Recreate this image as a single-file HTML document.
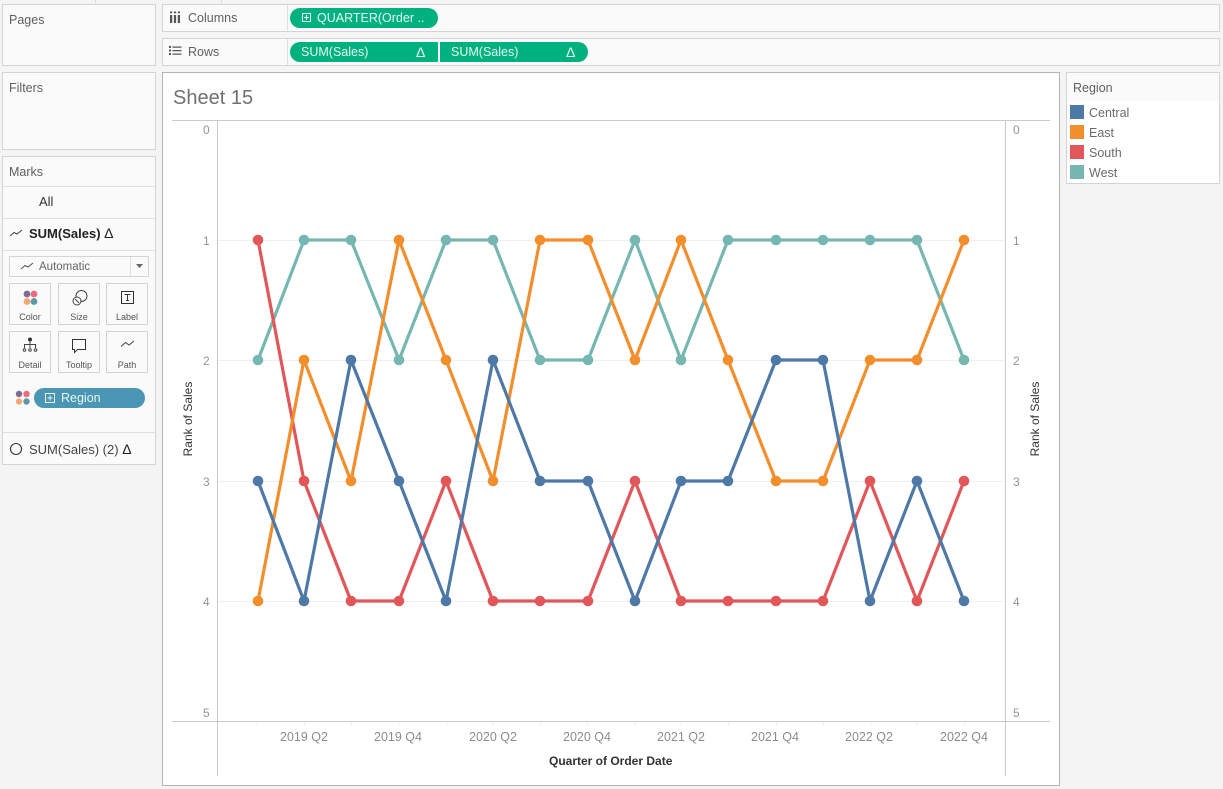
<!DOCTYPE html>
<html>
<head>
<meta charset="utf-8">
<style>
html,body{margin:0;padding:0;width:1223px;height:789px;overflow:hidden;background:#f4f4f4;font-family:"Liberation Sans",sans-serif;color:#5f5f5f;}
.a{position:absolute;box-sizing:border-box;}
.p{background:#fafafa;border:1px solid #d4d4d4;}
.t{position:absolute;white-space:nowrap;font-size:12.500px;line-height:14px;}
.pill{position:absolute;height:20px;background:#00b180;color:#e8f8f2;font-size:12.500px;line-height:20px;white-space:nowrap;}
.card{position:absolute;box-sizing:border-box;width:42px;height:42px;background:#fafafa;border:1px solid #d4d4d4;}
.card span{position:absolute;left:0;right:0;top:27px;text-align:center;font-size:9px;line-height:12px;color:#555;}
.card svg{position:absolute;left:0;top:0;}
.line{position:absolute;background:#e0e0e0;}
.n{position:absolute;font-size:12px;line-height:14px;color:#949494;}
.q{position:absolute;width:70px;text-align:center;font-size:12.500px;line-height:14px;color:#8c8c8c;top:730px;}
.chart g circle{r:5.300px;}
</style>
</head>
<body>
<div class="a" style="left:95px;top:0;width:1px;height:3px;background:#ddd"></div>
<div class="a" style="left:221px;top:0;width:1px;height:3px;background:#ddd"></div>

<!-- Pages -->
<div class="a p" style="left:2px;top:4px;width:154px;height:62px"></div>
<div class="t" style="left:9px;top:13px">Pages</div>
<!-- Filters -->
<div class="a p" style="left:2px;top:72px;width:154px;height:78px"></div>
<div class="t" style="left:9px;top:81px">Filters</div>
<!-- Marks -->
<div class="a p" style="left:2px;top:156px;width:154px;height:309px"></div>
<div class="t" style="left:9px;top:165px">Marks</div>
<div class="line" style="left:3px;top:186px;width:152px;height:1px"></div>
<div class="t" style="left:39px;top:195px;color:#333;font-size:13px">All</div>
<div class="line" style="left:3px;top:218px;width:152px;height:1px"></div>
<svg class="a" style="left:9px;top:227px" width="16" height="12"><path d="M1 9 L5 5.500 L8 7 L13 3" fill="none" stroke="#444" stroke-width="1"/></svg>
<div class="t" style="left:29px;top:226px;font-weight:bold;color:#222;font-size:13px">SUM(Sales) <span style="font-weight:normal;font-size:14px">Δ</span></div>
<div class="line" style="left:3px;top:250px;width:152px;height:1px"></div>

<div class="a" style="left:9px;top:256px;width:140px;height:21px;border:1px solid #d4d4d4;background:#fafafa"></div>
<div class="line" style="left:130px;top:257px;width:1px;height:19px"></div>
<svg class="a" style="left:20px;top:261px" width="16" height="10"><path d="M1 8 L5 4.500 L8 6 L13 2" fill="none" stroke="#555" stroke-width="1"/></svg>
<div class="t" style="left:39px;top:260px;font-size:11.500px;color:#666">Automatic</div>
<svg class="a" style="left:136px;top:264px" width="8" height="5"><path d="M0 0H7L3.500 4Z" fill="#666"/></svg>

<div class="card" style="left:9px;top:283px"><svg width="40" height="26"><circle cx="17" cy="10" r="3.400" fill="#7f6b97"/><circle cx="24" cy="10" r="3.400" fill="#ee6a7c"/><circle cx="17" cy="17.500" r="3.400" fill="#f2a873"/><circle cx="24" cy="17.500" r="3.400" fill="#5f96a6"/></svg><span>Color</span></div>
<div class="card" style="left:58px;top:283px"><svg width="40" height="26"><circle cx="22.500" cy="12" r="5.500" fill="none" stroke="#444"/><circle cx="18" cy="17" r="4" fill="#fafafa" stroke="#444"/><path d="M16 15L20 19" stroke="#444"/></svg><span>Size</span></div>
<div class="card" style="left:106px;top:283px"><svg width="40" height="26"><rect x="14.500" y="7.500" width="12" height="12" fill="none" stroke="#333"/><path d="M17.500 10.500H23.500M20.500 10.500V16.500M19 16.500H22" stroke="#333" fill="none"/></svg><span>Label</span></div>
<div class="card" style="left:9px;top:331px"><svg width="40" height="26"><circle cx="20" cy="7.500" r="2" fill="#333"/><path d="M20 9V12.500M14.500 16V12.500H25.500V16M20 12.500V16" stroke="#444" fill="none"/><circle cx="14.500" cy="18" r="1.300" fill="none" stroke="#444"/><circle cx="20" cy="18" r="1.300" fill="none" stroke="#444"/><circle cx="25.500" cy="18" r="1.300" fill="none" stroke="#444"/></svg><span>Detail</span></div>
<div class="card" style="left:58px;top:331px"><svg width="40" height="26"><path d="M13.500 7.500H26.500V17.500H18.500L15.500 20.500V17.500H13.500Z" fill="none" stroke="#333"/></svg><span>Tooltip</span></div>
<div class="card" style="left:106px;top:331px"><svg width="40" height="26"><path d="M14 14.500 L18.500 10.500 L22 13 L27 9" fill="none" stroke="#444"/></svg><span>Path</span></div>

<svg class="a" style="left:15px;top:390px" width="16" height="16"><circle cx="4" cy="4" r="3.200" fill="#7f6b97"/><circle cx="11.500" cy="4" r="3.200" fill="#ee6a7c"/><circle cx="4" cy="11.500" r="3.200" fill="#f2a873"/><circle cx="11.500" cy="11.500" r="3.200" fill="#5f96a6"/></svg>
<div class="pill" style="left:34px;top:388px;width:111px;border-radius:10px;background:#4a96b4;padding-left:27px;box-sizing:border-box;font-size:12.500px">Region</div>
<svg class="a" style="left:45px;top:393px" width="10" height="10"><rect x=".5" y=".5" width="9" height="9" fill="none" stroke="#e8f4f8"/><path d="M5 2.500V7.500M2.500 5H7.500" stroke="#e8f4f8"/></svg>

<div class="line" style="left:3px;top:432px;width:152px;height:1px"></div>
<svg class="a" style="left:9px;top:442px" width="14" height="14"><circle cx="7" cy="7" r="5.500" fill="none" stroke="#333" stroke-width="1.100"/></svg>
<div class="t" style="left:29px;top:442px;color:#444;font-size:13px">SUM(Sales) (2) <span style="color:#222;font-size:14px">Δ</span></div>

<!-- Columns / Rows -->
<div class="a p" style="left:162px;top:4px;width:1058px;height:28px"></div>
<div class="a p" style="left:162px;top:38px;width:1058px;height:28px"></div>
<div class="line" style="left:287px;top:5px;width:1px;height:26px"></div>
<div class="line" style="left:287px;top:39px;width:1px;height:26px"></div>
<svg class="a" style="left:169px;top:10px" width="12" height="14"><path d="M1 5H3.200V13H1ZM4.900 5H7.100V13H4.900ZM8.800 5H11V13H8.800Z" fill="#555"/><path d="M1 1.500H3.200V3.200H1ZM4.900 1.500H7.100V3.200H4.900ZM8.800 1.500H11V3.200H8.800Z" fill="#555"/></svg>
<div class="t" style="left:188px;top:11px">Columns</div>
<svg class="a" style="left:169px;top:45px" width="13" height="11"><path d="M0 1H2V3H0ZM0 4.500H2V6.500H0ZM0 8H2V10H0Z" fill="#555"/><path d="M3.500 1.500H12.500V2.700H3.500ZM3.500 5H12.500V6.200H3.500ZM3.500 8.500H12.500V9.700H3.500Z" fill="#555"/></svg>
<div class="t" style="left:188px;top:45px">Rows</div>

<div class="pill" style="left:290px;top:8px;width:148px;border-radius:10px;padding-left:27px;box-sizing:border-box">QUARTER(Order ..</div>
<svg class="a" style="left:302px;top:13px" width="10" height="10"><rect x=".5" y=".5" width="8" height="8" fill="none" stroke="#e8f8f2"/><path d="M4.500 2V7M2 4.500H7" stroke="#e8f8f2"/></svg>
<div class="pill" style="left:290px;top:42px;width:148px;border-radius:10px 0 0 10px;padding-left:11px;box-sizing:border-box">SUM(Sales)</div>
<div class="pill" style="left:440px;top:42px;width:148px;border-radius:0 10px 10px 0;padding-left:11px;box-sizing:border-box">SUM(Sales)</div>
<div class="pill" style="left:416px;top:42px;background:none;font-size:14px">Δ</div>
<div class="pill" style="left:566px;top:42px;background:none;font-size:14px">Δ</div>

<!-- Sheet -->
<div class="a" style="left:162px;top:72px;width:898px;height:714px;background:#fff;border:1px solid #b4b4b4"></div>
<div class="t" style="left:173px;top:85px;font-size:20px;line-height:26px;color:#707070">Sheet 15</div>

<svg class="a chart" style="left:0;top:0" width="1223" height="789">
<path fill="none" stroke="#cacaca" stroke-width="1" d="M172 120.500H1050M172 721.500H1050M217.500 120V776M1005.500 120V776"/>
<path stroke="#f0f0f0" stroke-width="1" fill="none" d="M218 240.500H1005M218 360.500H1005M218 481.500H1005M218 601.500H1005"/>
<path stroke="#efefef" fill="none" d="M257.500 722V726M304.500 722V726M351.500 722V726M398.500 722V726M446.500 722V726M493.500 722V726M540.500 722V726M587.500 722V726M634.500 722V726M681.500 722V726M728.500 722V726M776.500 722V726M823.500 722V726M870.500 722V726M917.500 722V726M964.500 722V726"/>

<!-- West -->
<polyline fill="none" stroke="#76b7b2" stroke-width="3.200" stroke-linejoin="round" points="258,360 304,240 351,240 399,360 446,240 493,240 540,360 588,360 635,240 681,360 728,240 776,240 823,240 870,240 917,240 964,360"/>
<g fill="#76b7b2"><circle cx="258" cy="360" r="5"/><circle cx="304" cy="240" r="5"/><circle cx="351" cy="240" r="5"/><circle cx="399" cy="360" r="5"/><circle cx="446" cy="240" r="5"/><circle cx="493" cy="240" r="5"/><circle cx="540" cy="360" r="5"/><circle cx="588" cy="360" r="5"/><circle cx="635" cy="240" r="5"/><circle cx="681" cy="360" r="5"/><circle cx="728" cy="240" r="5"/><circle cx="776" cy="240" r="5"/><circle cx="823" cy="240" r="5"/><circle cx="870" cy="240" r="5"/><circle cx="917" cy="240" r="5"/><circle cx="964" cy="360" r="5"/></g>

<!-- South -->
<polyline fill="none" stroke="#e15759" stroke-width="3.200" stroke-linejoin="round" points="258,240 304,481 351,601 399,601 446,481 493,601 540,601 588,601 635,481 681,601 728,601 776,601 823,601 870,481 917,601 964,481"/>
<g fill="#e15759"><circle cx="258" cy="240" r="5"/><circle cx="304" cy="481" r="5"/><circle cx="351" cy="601" r="5"/><circle cx="399" cy="601" r="5"/><circle cx="446" cy="481" r="5"/><circle cx="493" cy="601" r="5"/><circle cx="540" cy="601" r="5"/><circle cx="588" cy="601" r="5"/><circle cx="635" cy="481" r="5"/><circle cx="681" cy="601" r="5"/><circle cx="728" cy="601" r="5"/><circle cx="776" cy="601" r="5"/><circle cx="823" cy="601" r="5"/><circle cx="870" cy="481" r="5"/><circle cx="917" cy="601" r="5"/><circle cx="964" cy="481" r="5"/></g>

<!-- East -->
<polyline fill="none" stroke="#f28e2b" stroke-width="3.200" stroke-linejoin="round" points="258,601 304,360 351,481 399,240 446,360 493,481 540,240 588,240 635,360 681,240 728,360 776,481 823,481 870,360 917,360 964,240"/>
<g fill="#f28e2b"><circle cx="258" cy="601" r="5"/><circle cx="304" cy="360" r="5"/><circle cx="351" cy="481" r="5"/><circle cx="399" cy="240" r="5"/><circle cx="446" cy="360" r="5"/><circle cx="493" cy="481" r="5"/><circle cx="540" cy="240" r="5"/><circle cx="588" cy="240" r="5"/><circle cx="635" cy="360" r="5"/><circle cx="681" cy="240" r="5"/><circle cx="728" cy="360" r="5"/><circle cx="776" cy="481" r="5"/><circle cx="823" cy="481" r="5"/><circle cx="870" cy="360" r="5"/><circle cx="917" cy="360" r="5"/><circle cx="964" cy="240" r="5"/></g>

<!-- Central -->
<polyline fill="none" stroke="#4e79a7" stroke-width="3.200" stroke-linejoin="round" points="258,481 304,601 351,360 399,481 446,601 493,360 540,481 588,481 635,601 681,481 728,481 776,360 823,360 870,601 917,481 964,601"/>
<g fill="#4e79a7"><circle cx="258" cy="481" r="5"/><circle cx="304" cy="601" r="5"/><circle cx="351" cy="360" r="5"/><circle cx="399" cy="481" r="5"/><circle cx="446" cy="601" r="5"/><circle cx="493" cy="360" r="5"/><circle cx="540" cy="481" r="5"/><circle cx="588" cy="481" r="5"/><circle cx="635" cy="601" r="5"/><circle cx="681" cy="481" r="5"/><circle cx="728" cy="481" r="5"/><circle cx="776" cy="360" r="5"/><circle cx="823" cy="360" r="5"/><circle cx="870" cy="601" r="5"/><circle cx="917" cy="481" r="5"/><circle cx="964" cy="601" r="5"/></g>
</svg>

<!-- Left axis numbers -->
<div class="n" style="left:203px;top:123px">0</div>
<div class="n" style="left:203px;top:234px">1</div>
<div class="n" style="left:203px;top:354px">2</div>
<div class="n" style="left:203px;top:475px">3</div>
<div class="n" style="left:203px;top:595px">4</div>
<div class="n" style="left:203px;top:706px">5</div>
<!-- Right axis numbers -->
<div class="n" style="left:1013px;top:123px">0</div>
<div class="n" style="left:1013px;top:234px">1</div>
<div class="n" style="left:1013px;top:354px">2</div>
<div class="n" style="left:1013px;top:475px">3</div>
<div class="n" style="left:1013px;top:595px">4</div>
<div class="n" style="left:1013px;top:706px">5</div>

<div class="t" style="left:188px;top:419px;transform:translate(-50%,-50%) rotate(-90deg);color:#333;font-size:12px">Rank of Sales</div>
<div class="t" style="left:1035px;top:419px;transform:translate(-50%,-50%) rotate(-90deg);color:#333;font-size:12px">Rank of Sales</div>

<div class="q" style="left:269px">2019 Q2</div>
<div class="q" style="left:363px">2019 Q4</div>
<div class="q" style="left:458px">2020 Q2</div>
<div class="q" style="left:552px">2020 Q4</div>
<div class="q" style="left:646px">2021 Q2</div>
<div class="q" style="left:740px">2021 Q4</div>
<div class="q" style="left:834px">2022 Q2</div>
<div class="q" style="left:929px">2022 Q4</div>
<div class="t" style="left:549px;top:754px;color:#333;font-weight:bold;font-size:12px">Quarter of Order Date</div>

<!-- Legend -->
<div class="a p" style="left:1066px;top:72px;width:154px;height:112px"></div>
<div class="a" style="left:1067px;top:102px;width:152px;height:81px;background:#fff"></div>
<div class="t" style="left:1073px;top:81px">Region</div>
<div class="a" style="left:1070px;top:105px;width:14px;height:14px;background:#4e79a7"></div>
<div class="a" style="left:1070px;top:125px;width:14px;height:14px;background:#f28e2b"></div>
<div class="a" style="left:1070px;top:145px;width:14px;height:14px;background:#e15759"></div>
<div class="a" style="left:1070px;top:165px;width:14px;height:14px;background:#76b7b2"></div>
<div class="t" style="left:1089px;top:106px;color:#6a6a6a">Central</div>
<div class="t" style="left:1089px;top:126px;color:#6a6a6a">East</div>
<div class="t" style="left:1089px;top:146px;color:#6a6a6a">South</div>
<div class="t" style="left:1089px;top:166px;color:#6a6a6a">West</div>
</body>
</html>
